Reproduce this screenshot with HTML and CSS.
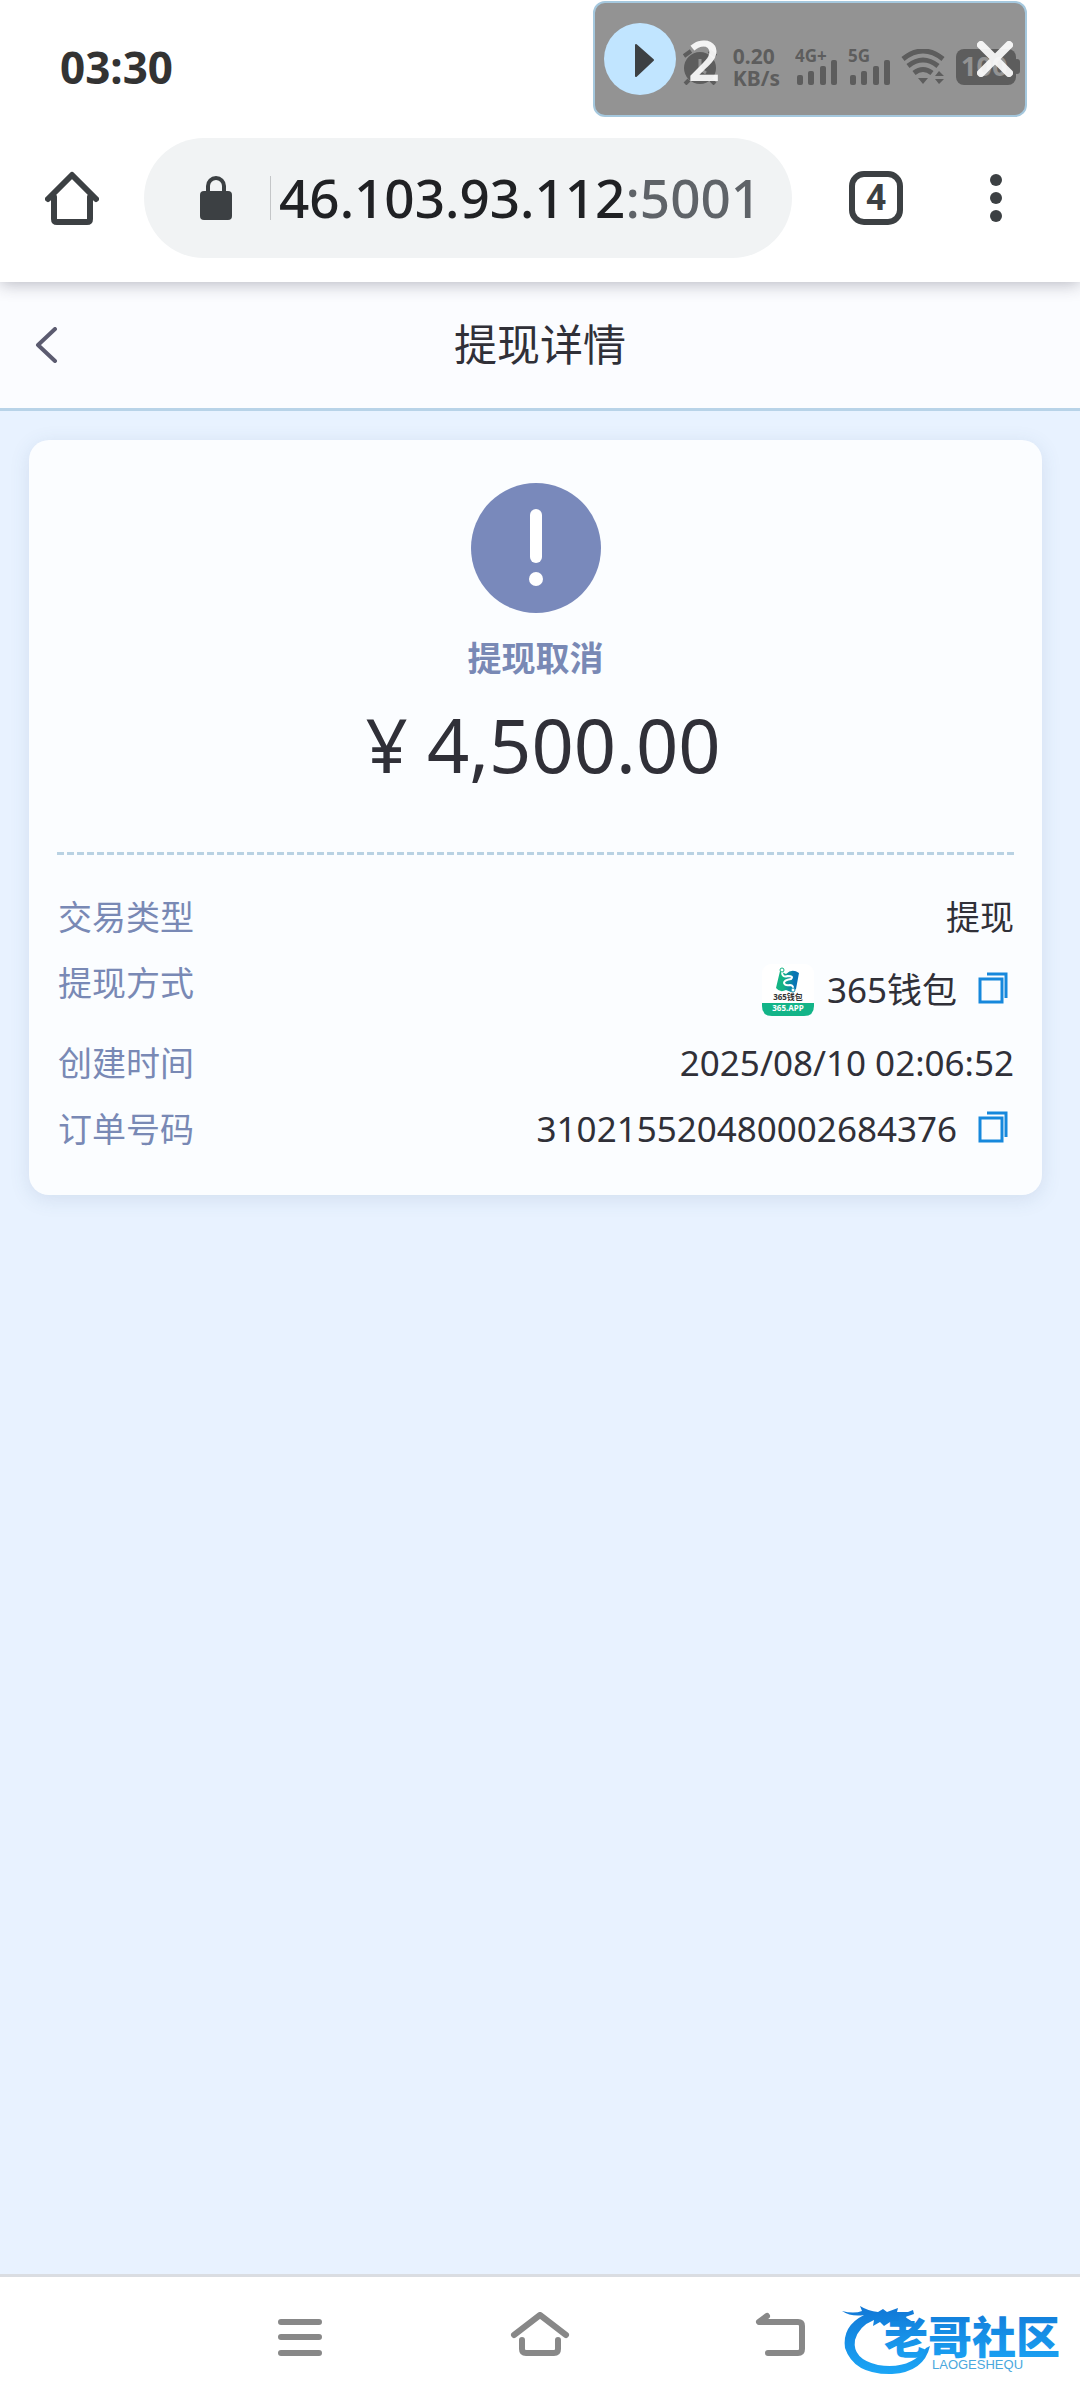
FILE: index.html
```html
<!DOCTYPE html>
<html lang="zh-CN">
<head>
<meta charset="utf-8">
<meta name="viewport" content="width=device-width, initial-scale=1">
<title>提现详情</title>
<link rel="stylesheet" href="styles.css">
</head>
<body>
<div class="status-bar">
  <time class="clock">03:30</time>
  <div class="status-icons">
    <svg class="alarm" width="36" height="36" viewBox="0 0 36 36" aria-label="闹钟">
      <circle cx="18" cy="19" r="16"/>
      <path class="line" d="M2 7L9 2M34 7L27 2M7 31L3 35M29 31L33 35"/>
      <path class="hand" d="M18 10V20L24 24"/>
    </svg>
    <div class="speed"><span>0.20</span><span>KB/s</span></div>
    <svg width="42" height="48" viewBox="0 -12 42 48">
      <text x="0" y="13">4G+</text>
      <rect x="2" y="26" width="6" height="10" rx="2"/><rect x="13" y="22" width="6" height="14" rx="2"/><rect x="25" y="17" width="6" height="19" rx="2"/><rect x="36" y="11" width="6" height="25" rx="2"/>
    </svg>
    <svg width="42" height="48" viewBox="0 -12 42 48">
      <text x="0" y="13">5G</text>
      <rect x="2" y="26" width="6" height="10" rx="2"/><rect x="13" y="22" width="6" height="14" rx="2"/><rect x="25" y="17" width="6" height="19" rx="2"/><rect x="36" y="11" width="6" height="25" rx="2"/>
    </svg>
    <svg width="44" height="36" viewBox="0 0 44 36" aria-label="Wi-Fi">
      <path class="wave" d="M2 10Q22 -6 42 10M7 17Q22 5 37 17M13 24Q22 17 31 24"/>
      <path d="M17 29H27L22 35ZM34 27H43L38 22ZM34 30H43L38 35Z"/>
    </svg>
    <svg class="battery" width="64" height="36" viewBox="0 0 64 36">
      <rect x="0" y="0" width="60" height="36" rx="8"/><rect x="58" y="10" width="6" height="15" rx="3"/>
      <text x="5" y="27">100</text>
    </svg>
  </div>
  <div class="recorder">
    <button class="play" aria-label="播放"><svg width="72" height="72" viewBox="0 0 72 72"><path d="M32 22L49 37L32 53Z" stroke-width="2" stroke-linejoin="round"/></svg></button>
    <span class="count">2</span>
    <button class="close" aria-label="关闭"><svg width="36" height="36" viewBox="0 0 36 36"><path d="M4 4L32 32M32 4L4 32"/></svg></button>
  </div>
</div>

<div class="toolbar">
  <button class="tool" aria-label="主页">
    <svg width="54" height="54" viewBox="0 0 54 54"><path d="M9 26V48Q9 51 12 51H42Q45 51 45 48V26M3 28L27 4L51 28" fill="none" stroke="#3c4043" stroke-width="6" stroke-linecap="round" stroke-linejoin="round"/></svg>
  </button>
  <button class="omnibox">
    <svg width="32" height="44" viewBox="0 0 32 44"><rect x="0" y="15" width="32" height="29" rx="4"/><path d="M8 16V10A8 8 0 0 1 24 10V16" fill="none" stroke="#3c4043" stroke-width="4"/></svg>
    <span class="url">46.103.93.112<span class="port">:5001</span></span>
  </button>
  <button class="tool tabs" aria-label="标签页"><span>4</span></button>
  <button class="tool more" aria-label="更多">
    <svg width="12" height="48" viewBox="0 0 12 48"><circle cx="6" cy="6" r="6"/><circle cx="6" cy="24" r="6"/><circle cx="6" cy="42" r="6"/></svg>
  </button>
</div>

<header class="page-header">
  <button class="back" aria-label="返回"><svg width="24" height="36" viewBox="0 0 24 36"><path d="M21 2L4 18L21 34"/></svg></button>
  <h1>提现详情</h1>
</header>

<main class="page">
  <section class="card">
    <div class="summary">
      <svg width="130" height="130" viewBox="0 0 130 130"><circle cx="65" cy="65" r="65" fill="#7989bb"/><rect x="59" y="26" width="12" height="54" rx="6" fill="#fff"/><circle cx="65" cy="96" r="7" fill="#fff"/></svg>
      <p class="state">提现取消</p>
      <p class="amount">¥ 4,500.00</p>
    </div>
    <dl class="details">
      <div class="row"><dt>交易类型</dt><dd class="cjk">提现</dd></div>
      <div class="row method"><dt>提现方式</dt>
        <dd>
          <svg class="wallet" width="52" height="52" viewBox="0 0 52 52">
            <defs><linearGradient id="swirl"><stop offset="0.3" stop-color="#14b484"/><stop offset="0.8" stop-color="#0874b4"/></linearGradient></defs>
            <rect width="52" height="52" rx="9" fill="#fff"/>
            <path d="M0 39H52V42Q52 52 42 52H10Q0 52 0 42Z" fill="#12b488"/>
            <path d="M18 7L24 10Q30 4 37 9L34 25L29 28L24 26Q18 29 14 24Z" fill="url(#swirl)"/>
            <path d="M20 8Q20 14 26 12Q32 12 29 15Q22 16 22 19Q23 22 28 21Q32 21 31 27" fill="none" stroke="#fff" stroke-width="2"/>
            <circle cx="20" cy="6" r="2" fill="#fff" stroke="#14b484"/><circle cx="31" cy="26" r="2" fill="#fff" stroke="#0f8fae"/>
            <text x="26" y="36" text-anchor="middle" fill="#333">365钱包</text>
            <text x="26" y="47" text-anchor="middle" fill="#fff">365.APP</text>
          </svg>
          <span>365钱包</span>
          <button class="copy" aria-label="复制提现方式"><svg width="30" height="32" viewBox="0 0 30 32"><path d="M2 7H24V30H2ZM9 2H28V26"/></svg></button>
        </dd>
      </div>
      <div class="row"><dt>创建时间</dt><dd>2025/08/10 02:06:52</dd></div>
      <div class="row"><dt>订单号码</dt>
        <dd>
          <span>310215520480002684376</span>
          <button class="copy" aria-label="复制订单号码"><svg width="30" height="32" viewBox="0 0 30 32"><path d="M2 7H24V30H2ZM9 2H28V26"/></svg></button>
        </dd>
      </div>
    </dl>
  </section>
</main>

<nav class="system-nav">
  <button aria-label="最近任务"><svg width="60" height="44" viewBox="0 0 60 44"><path d="M11 10H49M11 25H49M11 41H49"/></svg></button>
  <button aria-label="主屏幕"><svg width="60" height="44" viewBox="0 0 60 44"><path d="M4 23L30 3L56 23M12 28V37Q12 41 16 41H44Q48 41 48 37V28"/></svg></button>
  <button aria-label="返回"><svg width="60" height="44" viewBox="0 0 60 44"><path d="M17 4L9 10H48Q52 10 52 14V37Q52 41 48 41H18"/></svg></button>
  <div class="watermark">
    <svg width="222" height="76" viewBox="0 0 222 76">
      <defs>
        <linearGradient id="sea" x2="0" y2="1"><stop offset="0" stop-color="#1177d6"/><stop offset="1" stop-color="#1ba6f6"/></linearGradient>
      </defs>
      <path fill="url(#sea)" d="M0 9Q12 12 20 9L18 4Q26 9 36 10L41 7L45 10L56 6L55 10L66 10L71 8L72 12L63 15L71 20L68 23L56 19L60 26L48 20L42 24L38 20L31 24L32 18Q17 24 13 38Q10 57 36 63Q69 68 84 46L88 44Q82 70 50 72Q12 73 3 46Q0 24 22 13Q9 15 0 9Z"/>
      <text class="brand" x="42" y="52" fill="url(#sea)">老哥社区</text>
      <text class="brand-sub" x="90" y="67" fill="#4aa8dd">LAOGESHEQU</text>
    </svg>
  </div>
</nav>
</body>
</html>
```

FILE: styles.css
```css
* { box-sizing: border-box; }

body {
  margin: 0;
  min-height: 100vh;
  display: flex;
  flex-direction: column;
  background: #e8f2ff;
  color: #303038;
  font: 35px/48px "Noto Sans", "Noto Sans CJK SC", sans-serif;
}

h1, p, dl, dd { margin: 0; }
svg { display: block; flex: none; }

button {
  padding: 0;
  border: 0;
  background: none;
  color: inherit;
  font: inherit;
  cursor: pointer;
}

/* Phone status bar */
.status-bar {
  position: relative;
  z-index: 1;
  display: flex;
  justify-content: space-between;
  align-items: center;
  height: 134px;
  padding: 0 60px;
  background: #fff;
}

.clock { font-size: 44px; font-weight: 700; color: #333; }

.status-icons { display: flex; align-items: center; gap: 11px; color: #383838; fill: #383838; }
.status-icons svg { align-self: flex-end; margin-bottom: 12px; }
.status-icons text { font-size: 17px; font-weight: 700; }
.status-icons .battery text { font-size: 27px; line-height: 30px; fill: #fff; }
.alarm .line { stroke: #383838; stroke-width: 4; }
.alarm .hand { fill: none; stroke: #fff; stroke-width: 3; }
.wave { fill: none; stroke: #383838; stroke-width: 5; }
.speed { display: flex; flex-direction: column; margin: 0 4px; font-size: 21px; line-height: 22px; font-weight: 700; }

/* Floating recorder widget over the status icons */
.recorder {
  position: absolute;
  top: 1px;
  right: 53px;
  width: 434px;
  height: 116px;
  display: flex;
  align-items: center;
  gap: 12px;
  padding: 0 12px 0 9px;
  border: 2px solid #a5c8de;
  border-radius: 12px;
  background: rgba(107, 107, 107, .73);
}

.play { border-radius: 50%; background: #c1e5ff; fill: #3c4043; stroke: #3c4043; }
.count { color: rgba(255, 255, 255, .9); font-size: 56px; line-height: 60px; font-weight: 600; }
.close { margin-left: auto; fill: none; stroke: rgba(255, 255, 255, .9); stroke-width: 8; stroke-linecap: round; }

/* Browser toolbar */
.toolbar {
  position: relative;
  display: flex;
  align-items: center;
  height: 148px;
  padding: 0 78px 20px 45px;
  background: #fff;
  box-shadow: 0 2px 16px rgba(40, 40, 60, .32);
  fill: #3c4043;
}

.omnibox {
  flex: 1;
  display: flex;
  align-items: center;
  height: 120px;
  margin: 0 57px 0 45px;
  padding-left: 56px;
  border-radius: 60px;
  background: #f1f3f4;
}

.url {
  margin-left: 38px;
  padding-left: 8px;
  border-left: 1px solid #c4c6c8;
  color: #202124;
  font-size: 53px;
  line-height: 44px;
  font-weight: 500;
}

.port { color: #5f6368; }

.tabs {
  width: 54px;
  height: 54px;
  border: 6px solid #3c4043;
  border-radius: 15px;
  color: #3c4043;
  font: 700 36px/40px Roboto, sans-serif;
}

.more { margin-left: 87px; }

/* Page header */
.page-header {
  display: grid;
  grid-template-columns: 1fr auto 1fr;
  align-items: center;
  height: 129px;
  padding: 0 34px;
  border-bottom: 3px solid #b8d3e8;
  background: #fbfcff;
}

.page-header h1 { font-size: 43px; font-weight: 400; line-height: 60px; }
.back { justify-self: start; fill: none; stroke: #5b5b70; stroke-width: 4; stroke-linecap: round; stroke-linejoin: round; }

/* Withdrawal card */
.page { flex: 1; padding: 29px 38px 29px 29px; }

.card {
  padding: 43px 28px 42px;
  border-radius: 20px;
  background: #fbfdff;
  box-shadow: 0 4px 20px rgba(60, 90, 130, .13);
}

.summary { display: flex; flex-direction: column; align-items: center; padding-bottom: 64px; }
.state { margin-top: 21px; color: #7989b5; font-size: 34px; font-weight: 700; }
.amount { margin-top: 20px; padding-left: 15px; font-size: 74px; line-height: 86px; }

.details {
  display: flex;
  flex-direction: column;
  gap: 18px;
  padding-top: 41px;
  background: repeating-linear-gradient(90deg, #b9d2e3 0 7px, transparent 7px 10px) top / 100% 3px no-repeat;
}

.row { display: flex; justify-content: space-between; }
.method { min-height: 62px; }
.row dt { padding-left: 1px; color: #7989b5; font-size: 34px; }
.row dd { display: flex; align-items: center; }
.row .cjk { font-size: 34px; }
.wallet { margin-right: 13px; }
.wallet text { font-size: 8px; font-weight: 700; }
.copy { margin: 0 6px 4px 21px; fill: none; stroke: #1688dc; stroke-width: 3; }

/* System navigation */
.system-nav {
  position: relative;
  display: flex;
  justify-content: center;
  gap: 180px;
  height: 126px;
  padding-top: 35px;
  border-top: 3px solid #dadde2;
  background: #fff;
}

.system-nav button { height: 44px; fill: none; stroke: #888; stroke-width: 6; stroke-linecap: round; stroke-linejoin: round; }
.watermark { position: absolute; right: 16px; bottom: 22px; }
.brand { font: 900 44px "Noto Sans CJK SC", sans-serif; }
.brand-sub { font: 400 13px "Liberation Sans", sans-serif; }
```
